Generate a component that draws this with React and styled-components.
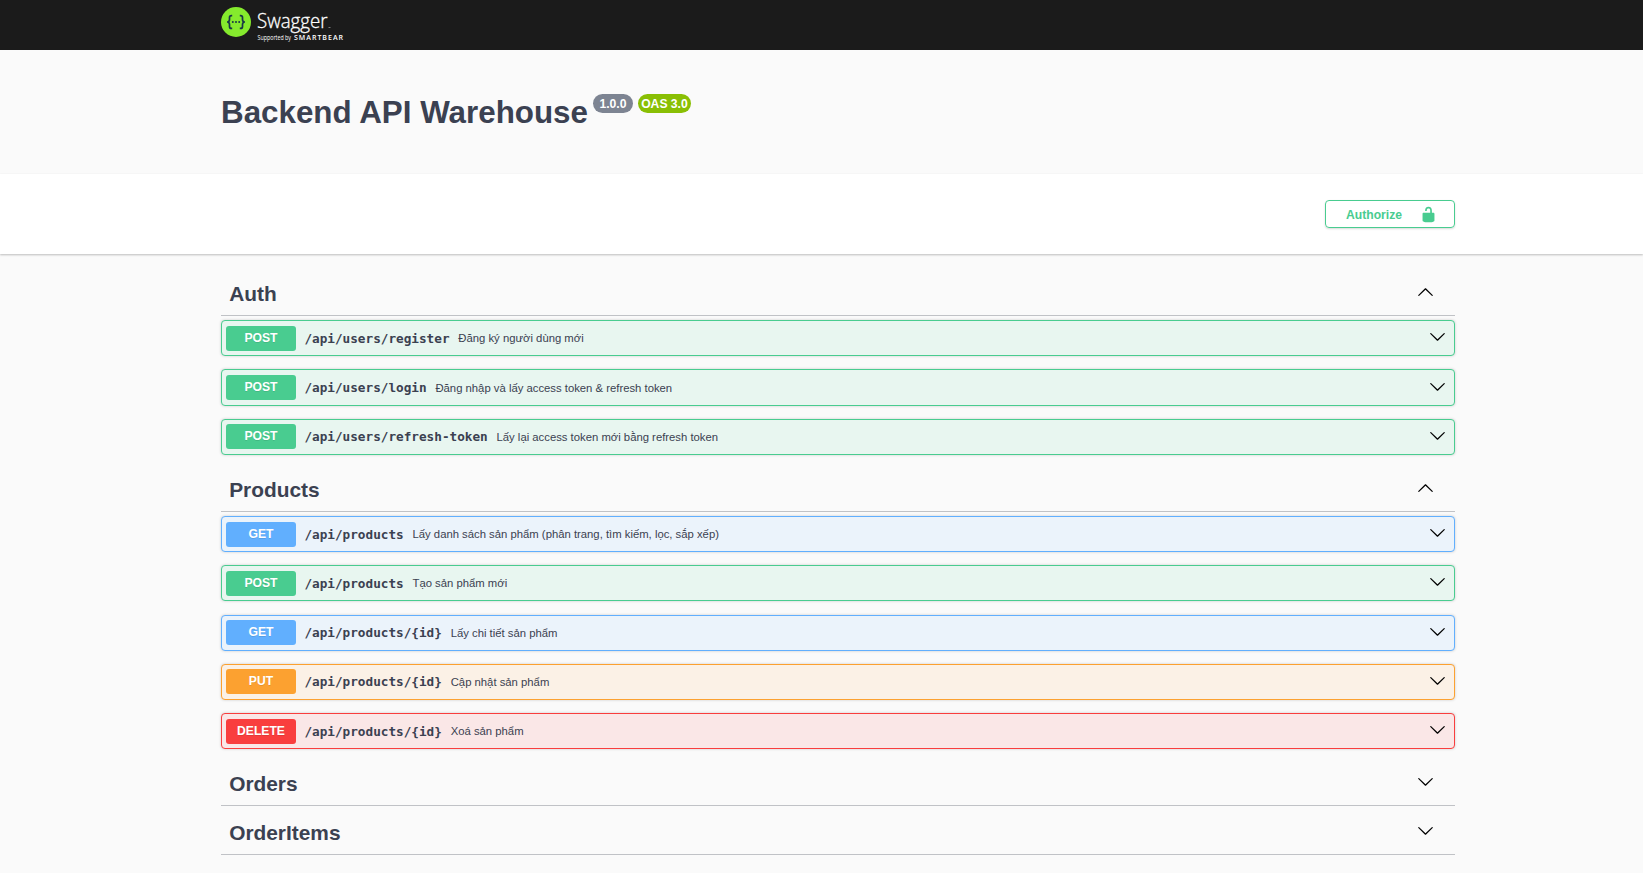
import React from "react";
import styled, { createGlobalStyle } from "styled-components";

const GlobalStyle = createGlobalStyle`
  body {
    margin: 0;
    background: #fafafa;
    color: #3b4151;
    font-family: "Liberation Sans", Arial, sans-serif;
  }
  *, *::before, *::after { box-sizing: border-box; }
`;

const METHODS = {
  POST: { main: "#49cc90", fill: "#e8f6f0" },
  GET: { main: "#61affe", fill: "#ebf3fb" },
  PUT: { main: "#fca130", fill: "#fbf1e6" },
  DELETE: { main: "#f93e3e", fill: "#fae7e7" },
};

const SECTIONS = [
  {
    name: "Auth",
    open: true,
    operations: [
      ["POST", "/api/users/register", "Đăng ký người dùng mới"],
      ["POST", "/api/users/login", "Đăng nhập và lấy access token & refresh token"],
      ["POST", "/api/users/refresh-token", "Lấy lại access token mới bằng refresh token"],
    ],
  },
  {
    name: "Products",
    open: true,
    operations: [
      ["GET", "/api/products", "Lấy danh sách sản phẩm (phân trang, tìm kiếm, lọc, sắp xếp)"],
      ["POST", "/api/products", "Tạo sản phẩm mới"],
      ["GET", "/api/products/{id}", "Lấy chi tiết sản phẩm"],
      ["PUT", "/api/products/{id}", "Cập nhật sản phẩm"],
      ["DELETE", "/api/products/{id}", "Xoá sản phẩm"],
    ],
  },
  { name: "Orders", open: false, operations: [] },
  { name: "OrderItems", open: false, operations: [] },
];

const Page = styled.div`
  width: 100%;
  height: 873px;
  overflow: hidden;
`;

const Wrapper = styled.div`
  width: 1234px;
  margin-left: 221px;
`;

const Topbar = styled.header`
  height: 50px;
  background: #1b1b1b;
`;

const Logo = styled.svg`
  display: block;
  width: 130px;
  height: 50px;
`;

const Info = styled.section`
  height: 124px;
  padding-top: 43.5px;
`;

const TitleRow = styled(Wrapper)`
  display: flex;
  align-items: flex-start;
`;

const Title = styled.h2`
  margin: 0 5.5px 0 0;
  font-size: 31.35px;
  line-height: 37px;
  font-weight: 700;
  white-space: nowrap;
`;

const Pill = styled.span`
  height: 19px;
  width: ${(p) => p.$width}px;
  margin-right: 5px;
  margin-top: 0.5px;
  padding: 1px 1px 0 0;
  border-radius: 10px;
  background: ${(p) => p.$color};
  color: #fff;
  font-size: 12.17px;
  font-weight: 700;
  line-height: 19px;
  text-align: center;
  white-space: nowrap;
`;

const Scheme = styled.section`
  height: 80px;
  padding-top: 26px;
  background: #fff;
  box-shadow: 0 1px 2px rgba(0, 0, 0, 0.25);
`;

const SchemeRow = styled(Wrapper)`
  display: flex;
  justify-content: flex-end;
`;

const AuthorizeButton = styled.button`
  display: flex;
  align-items: center;
  justify-content: space-between;
  width: 130px;
  height: 28px;
  padding: 1px 17px 0 20px;
  border: 1px solid #49cc90;
  border-radius: 4px;
  background: transparent;
  box-shadow: 0 1px 2px rgba(0, 0, 0, 0.15);
  color: #49cc90;
  font: 700 12.17px "Liberation Sans", Arial, sans-serif;
`;

const Sections = styled(Wrapper)`
  padding-top: 17.22px;
`;

const Section = styled.section`
  padding-bottom: ${(p) => (p.$open ? 12.2 : 0)}px;
`;

const SectionHeader = styled.div`
  display: flex;
  align-items: center;
  justify-content: space-between;
  height: 44.65px;
  margin-bottom: 4.35px;
  padding: 0 21px 0 8.2px;
  border-bottom: 1px solid rgba(59, 65, 81, 0.3);
`;

const SectionName = styled.h3`
  margin: 0;
  padding-top: 2px;
  font-size: 20.86px;
  line-height: 24px;
  font-weight: 700;
`;

const Operations = styled.div`
  display: flex;
  flex-direction: column;
  gap: 13.05px;
`;

const Operation = styled.div`
  display: flex;
  align-items: center;
  height: 36.2px;
  padding: 0 8.5px 0 4px;
  border: 1px solid ${(p) => METHODS[p.$method].main};
  border-radius: 4px;
  background: ${(p) => METHODS[p.$method].fill};
  box-shadow: 0 0 3px rgba(0, 0, 0, 0.19);
`;

const Method = styled.span`
  width: 70px;
  height: 25px;
  border-radius: 3px;
  background: ${(p) => METHODS[p.$method].main};
  color: #fff;
  font-size: 12.17px;
  font-weight: 700;
  line-height: 24px;
  text-align: center;
  text-shadow: 0 1px 0 rgba(0, 0, 0, 0.1);
`;

const Path = styled.span`
  margin-left: 8.4px;
  font-family: "DejaVu Sans Mono", monospace;
  font-size: 12.7px;
  font-weight: 700;
  white-space: nowrap;
`;

const Summary = styled.span`
  flex: 1;
  margin-left: 8.8px;
  font-size: 11.3px;
  white-space: nowrap;
`;

const ArrowIcon = styled.svg`
  display: block;
  width: 17px;
  height: 17px;
  margin-bottom: ${(p) => (p.$up ? 1 : 3)}px;
  transform: ${(p) => (p.$up ? "rotate(180deg)" : "none")};
`;

function Arrow({ up }) {
  return (
    <ArrowIcon viewBox="0 0 20 20" $up={up}>
      <path d="M17.418 6.109c.272-.268.709-.268.979 0s.271.701 0 .969l-7.908 7.83c-.27.268-.707.268-.979 0l-7.908-7.83c-.27-.268-.27-.701 0-.969s.709-.268.979 0L10 13.25z" />
    </ArrowIcon>
  );
}

function SwaggerLogo() {
  return (
    <Logo viewBox="221 0 130 50">
      <circle cx="236" cy="22" r="15" fill="#85ea2d" />
      <g fill="none" stroke="#173647" strokeWidth="1.7">
        <path d="M232.2 15.6h-.8q-1.9 0-1.9 2v1.9q0 2.5-2.4 2.5 2.4 0 2.4 2.5v1.9q0 2 1.9 2h.8" />
        <path d="M239.8 15.6h.8q1.9 0 1.9 2v1.9q0 2.5 2.4 2.5-2.4 0-2.4 2.5v1.9q0 2-1.9 2h-.8" />
      </g>
      <g fill="#173647">
        <circle cx="232.8" cy="22" r="1" />
        <circle cx="236" cy="22" r="1" />
        <circle cx="239.2" cy="22" r="1" />
      </g>
      <g fill="#fff" fontFamily='"Open Sans", sans-serif'>
        <text x="257" y="28.3" fontSize="19.5" fontWeight="300" stroke="#fff" strokeWidth=".3" textLength="70.5" lengthAdjust="spacingAndGlyphs">Swagger</text>
        <text x="257.5" y="40.3" fontSize="6.2" textLength="33.5" lengthAdjust="spacingAndGlyphs">Supported by</text>
        <text x="294" y="40.3" fontSize="7" fontWeight="600" textLength="49">SMARTBEAR</text>
      </g>
      <path d="M328.5 27.5h2" stroke="#fff" strokeWidth=".7" opacity=".6" />
    </Logo>
  );
}

function Unlocked() {
  return (
    <svg width="17" height="17" viewBox="0 0 20 20" fill="#49cc90">
      <path d="M15.8 8H14V5.6C14 2.703 12.665 1 10 1 7.334 1 6 2.703 6 5.6V6h2v-.801C8 3.754 8.797 3 10 3c1.203 0 2 .754 2 2.199V8H4c-.553 0-1 .646-1 1.199V17c0 .549.428 1.139.951 1.307l1.197.387C5.672 18.861 6.55 19 7.1 19h5.8c.549 0 1.428-.139 1.951-.307l1.196-.387c.524-.167.953-.757.953-1.306V9.199C17 8.646 16.352 8 15.8 8z" />
    </svg>
  );
}

export default function App() {
  return (
    <Page>
      <GlobalStyle />
      <Topbar>
        <Wrapper>
          <SwaggerLogo />
        </Wrapper>
      </Topbar>
      <Info>
        <TitleRow>
          <Title>Backend API Warehouse</Title>
          <Pill $color="#7d8492" $width={40}>1.0.0</Pill>
          <Pill $color="#89bf04" $width={53}>OAS 3.0</Pill>
        </TitleRow>
      </Info>
      <Scheme>
        <SchemeRow>
          <AuthorizeButton>
            Authorize
            <Unlocked />
          </AuthorizeButton>
        </SchemeRow>
      </Scheme>
      <Sections>
        {SECTIONS.map(({ name, open, operations }) => (
          <Section key={name} $open={open}>
            <SectionHeader>
              <SectionName>{name}</SectionName>
              <Arrow up={open} />
            </SectionHeader>
            <Operations>
              {operations.map(([method, path, summary]) => (
                <Operation key={method + path} $method={method}>
                  <Method $method={method}>{method}</Method>
                  <Path>{path}</Path>
                  <Summary>{summary}</Summary>
                  <Arrow />
                </Operation>
              ))}
            </Operations>
          </Section>
        ))}
      </Sections>
    </Page>
  );
}
